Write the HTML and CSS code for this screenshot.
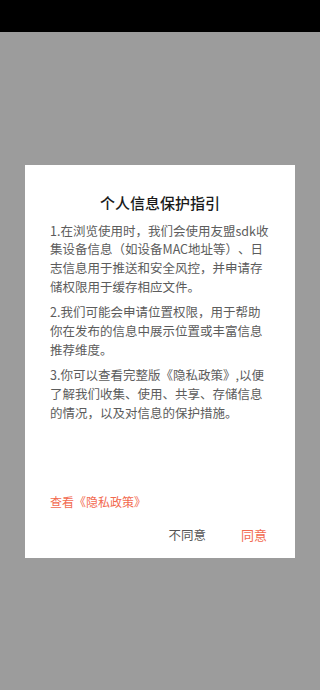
FILE: index.html
```html
<!DOCTYPE html>
<html lang="zh-CN">
<head>
    <meta charset="UTF-8">
    <meta name="viewport" content="width=device-width, initial-scale=1.0">
    <title>个人信息保护指引</title>
    <link rel="stylesheet" href="styles.css">
</head>
<body>
    <div class="status-bar"></div>
    <div class="mask">
        <div class="dialog">
            <h3 class="dialog-title">个人信息保护指引</h3>
            <p class="dialog-text">1.在浏览使用时，我们会使用友盟sdk收集设备信息（如设备MAC地址等）、日志信息用于推送和安全风控，并申请存储权限用于缓存相应文件。</p>
            <p class="dialog-text">2.我们可能会申请位置权限，用于帮助你在发布的信息中展示位置或丰富信息推荐维度。</p>
            <p class="dialog-text">3.你可以查看完整版《隐私政策》,以便了解我们收集、使用、共享、存储信息的情况，以及对信息的保护措施。</p>
            <a class="policy-link" href="#">查看《隐私政策》</a>
            <div class="dialog-buttons">
                <button class="btn btn-cancel">不同意</button>
                <button class="btn btn-ok">同意</button>
            </div>
        </div>
    </div>
</body>
</html>
```

FILE: styles.css
```css
body {
    font-family: "Noto Sans CJK SC", "Noto Sans", sans-serif;
    text-spacing-trim: space-all;
    margin: 0;
    height: 690px;
    display: flex;
    flex-direction: column;
    background: #9c9c9c;
}
.status-bar {
    height: 32px;
    background: #000;
}
.mask {
    flex: 1;
    display: flex;
    align-items: center;
    justify-content: center;
}
.dialog {
    width: 270px;
    height: 393px;
    box-sizing: border-box;
    background: #fff;
    padding: 27px 25px 14px;
    display: flex;
    flex-direction: column;
}
.dialog-title {
    margin: 0 0 8px;
    font-size: 15px;
    font-weight: 500;
    line-height: 22px;
    text-align: center;
    color: #1a1a1a;
}
.dialog-text {
    margin: 0 0 7px;
    font-size: 12.5px;
    line-height: 18.7px;
    color: #5c5c5c;
}
.policy-link {
    margin-top: auto;
    font-size: 12px;
    line-height: 18px;
    color: #f26a4f;
    text-decoration: none;
}
.dialog-buttons {
    display: flex;
    justify-content: flex-end;
    gap: 35px;
    margin-top: 15px;
    padding-right: 3px;
}
.btn {
    border: none;
    background: none;
    padding: 0;
    font-family: inherit;
    line-height: 18px;
    cursor: pointer;
}
.btn-cancel {
    font-size: 12.5px;
    color: #555;
}
.btn-ok {
    font-size: 13px;
    color: #f26a4f;
}
```
